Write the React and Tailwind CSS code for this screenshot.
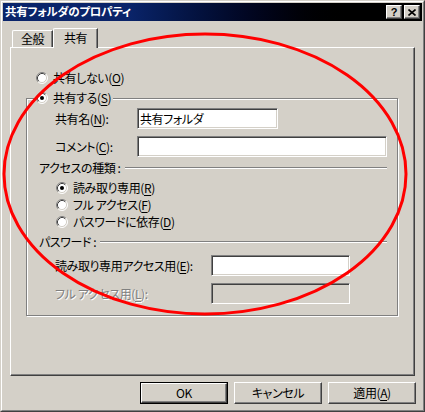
import React from "react";

const face = "font-['Noto_Sans_CJK_JP','Noto_Sans',sans-serif] [font-feature-settings:'palt']";

function Radio({ checked }) {
  return (
    <svg width="12" height="12" viewBox="0 0 12 12" className="shrink-0">
      <circle cx="6" cy="6" r="5" fill="#ffffff" />
      <path d="M2.11 9.89 A5.5 5.5 0 0 1 9.89 2.11" fill="none" stroke="#808080" strokeWidth="1" />
      <path d="M9.89 2.11 A5.5 5.5 0 0 1 2.11 9.89" fill="none" stroke="#ffffff" strokeWidth="1" />
      <path d="M2.82 9.18 A4.5 4.5 0 0 1 9.18 2.82" fill="none" stroke="#404040" strokeWidth="1" />
      <path d="M9.18 2.82 A4.5 4.5 0 0 1 2.82 9.18" fill="none" stroke="#d4d0c8" strokeWidth="1" />
      {checked && <circle cx="6" cy="6" r="2" fill="#000000" />}
    </svg>
  );
}

function Key({ children }) {
  return <span className="underline underline-offset-[2px]">{children}</span>;
}

function Field({ w, h = "h-[21px]", disabled, children }) {
  return (
    <div
      className={`${w} ${h} border border-t-[#808080] border-l-[#808080] border-b-white border-r-white shadow-[inset_1px_1px_0_#404040,inset_-1px_-1px_0_#d4d0c8] flex items-center pl-[2px] ${
        disabled ? "bg-[#d4d0c8]" : "bg-white"
      }`}
    >
      {children}
    </div>
  );
}

function Etched() {
  return <div className="flex-1 h-[2px] border-t border-t-[#808080] border-b border-b-white" />;
}

function Button({ children, isDefault }) {
  return (
    <div className={`w-[88px] h-[22px] ${isDefault ? "border border-black" : ""}`}>
      <div className="w-full h-full border border-t-white border-l-white border-b-[#404040] border-r-[#404040] shadow-[inset_-1px_-1px_0_#808080] flex items-center justify-center">
        {children}
      </div>
    </div>
  );
}

export default function App() {
  return (
    <div className={`relative w-[425px] h-[412px] bg-[#d4d0c8] text-black text-[12px] tracking-[-0.4px] ${face} border border-t-[#d4d0c8] border-l-[#d4d0c8] border-b-[#404040] border-r-[#404040]`}>
      <div className="h-full border border-t-white border-l-white border-b-[#808080] border-r-[#808080] p-[1px]">
        {/* title bar */}
        <div className="h-[18px] flex items-center justify-between pl-[2px] pr-[2px] bg-linear-to-r from-[#0a246a] from-30% to-black to-85%">
          <span className="text-white font-bold text-[11.5px] tracking-[-0.3px] leading-none">共有フォルダのプロパティ</span>
          <div className="flex gap-[2px] items-center">
            <div className="w-[16px] h-[14px] border border-t-white border-l-white border-b-[#404040] border-r-[#404040] shadow-[inset_-1px_-1px_0_#808080] bg-[#d4d0c8] flex items-center justify-center text-[11px] font-bold leading-none font-['Liberation_Sans',sans-serif]">
              ?
            </div>
            <div className="w-[16px] h-[14px] border border-t-white border-l-white border-b-[#404040] border-r-[#404040] shadow-[inset_-1px_-1px_0_#808080] bg-[#d4d0c8] flex items-center justify-center">
              <svg width="8" height="7" viewBox="0 0 8 7">
                <path d="M0.5 0.5 L7.5 6.5 M7.5 0.5 L0.5 6.5" stroke="#000" strokeWidth="1.6" />
              </svg>
            </div>
          </div>
        </div>

        {/* tabs */}
        <div className="mt-[7px] ml-[9px] h-[19px] flex items-end">
          <div className="w-[41px] h-[17px] border-t border-l border-t-white border-l-white border-r border-r-[#404040] shadow-[inset_-1px_0_0_#808080] rounded-tl-[2px] flex items-center justify-center">
            全般
          </div>
          <div className="relative z-10 -mb-[1px] w-[45px] h-[20px] bg-[#d4d0c8] border-t border-l border-t-white border-l-white border-r border-r-[#404040] shadow-[inset_-1px_0_0_#808080] rounded-tl-[2px] flex items-center justify-center pb-[2px]">
            共有
          </div>
        </div>

        {/* tab panel */}
        <div className="ml-[7px] w-[405px] h-[329px] border border-t-white border-l-white border-b-[#404040] border-r-[#404040] shadow-[inset_-1px_-1px_0_#808080]">
          <div className="mt-[22px] pl-[25px] h-[16px] flex items-center gap-[5px]">
            <Radio />
            <span>
              共有しない(<Key>O</Key>)
            </span>
          </div>

          {/* group box */}
          <div className="relative mt-[12px] ml-[15px] w-[372px] border border-[#808080] shadow-[inset_1px_1px_0_#ffffff,1px_1px_0_#ffffff]">
            <div className="absolute -top-[9px] left-[9px] h-[16px] flex items-center gap-[5px] bg-[#d4d0c8] pr-[2px]">
              <Radio checked />
              <span>
                共有する(<Key>S</Key>)
              </span>
            </div>

            <div className="pt-[9px] pb-[11px]">
              <div className="flex items-center pl-[28px]">
                <span className="w-[82px]">
                  共有名(<Key>N</Key>):
                </span>
                <Field w="w-[141px]">共有フォルダ</Field>
              </div>
              <div className="mt-[7px] flex items-center pl-[28px]">
                <span className="w-[82px]">
                  コメント(<Key>C</Key>):
                </span>
                <Field w="w-[250px]" />
              </div>

              <div className="mt-[4px] h-[14px] flex items-center pl-[12px] pr-[10px]">
                <span className="pr-[4px]">アクセスの種類 :</span>
                <Etched />
              </div>

              <div className="mt-[4px] pl-[29px]">
                <div className="h-[17px] flex items-center gap-[5px]">
                  <Radio checked />
                  <span>
                    読み取り専用(<Key>R</Key>)
                  </span>
                </div>
                <div className="h-[17px] flex items-center gap-[5px]">
                  <Radio />
                  <span>
                    フル アクセス(<Key>F</Key>)
                  </span>
                </div>
                <div className="h-[17px] flex items-center gap-[5px]">
                  <Radio />
                  <span>
                    パスワードに依存(<Key>D</Key>)
                  </span>
                </div>
              </div>

              <div className="mt-[5px] h-[14px] flex items-center pl-[12px] pr-[10px]">
                <span className="pr-[4px]">パスワード :</span>
                <Etched />
              </div>

              <div className="mt-[6px] flex items-center pl-[28px]">
                <span className="w-[156px]">
                  読み取り専用アクセス用(<Key>E</Key>):
                </span>
                <Field w="w-[139px]" />
              </div>
              <div className="mt-[7px] flex items-center pl-[28px]">
                <span className="w-[156px] text-[#808080] [text-shadow:1px_1px_0_#ffffff]">
                  フル アクセス用(<Key>L</Key>):
                </span>
                <Field w="w-[139px]" disabled />
              </div>
            </div>
          </div>
        </div>

        {/* buttons */}
        <div className="mt-[6px] flex justify-end gap-[6px] pr-[6px]">
          <Button isDefault>OK</Button>
          <Button>キャンセル</Button>
          <Button>
            適用(<Key>A</Key>)
          </Button>
        </div>
      </div>

      {/* red annotation ellipse */}
      <svg className="absolute left-0 top-0 pointer-events-none" width="425" height="412">
        <ellipse cx="204" cy="173" rx="201" ry="140" fill="none" stroke="#ff0000" strokeWidth="3" />
      </svg>
    </div>
  );
}
